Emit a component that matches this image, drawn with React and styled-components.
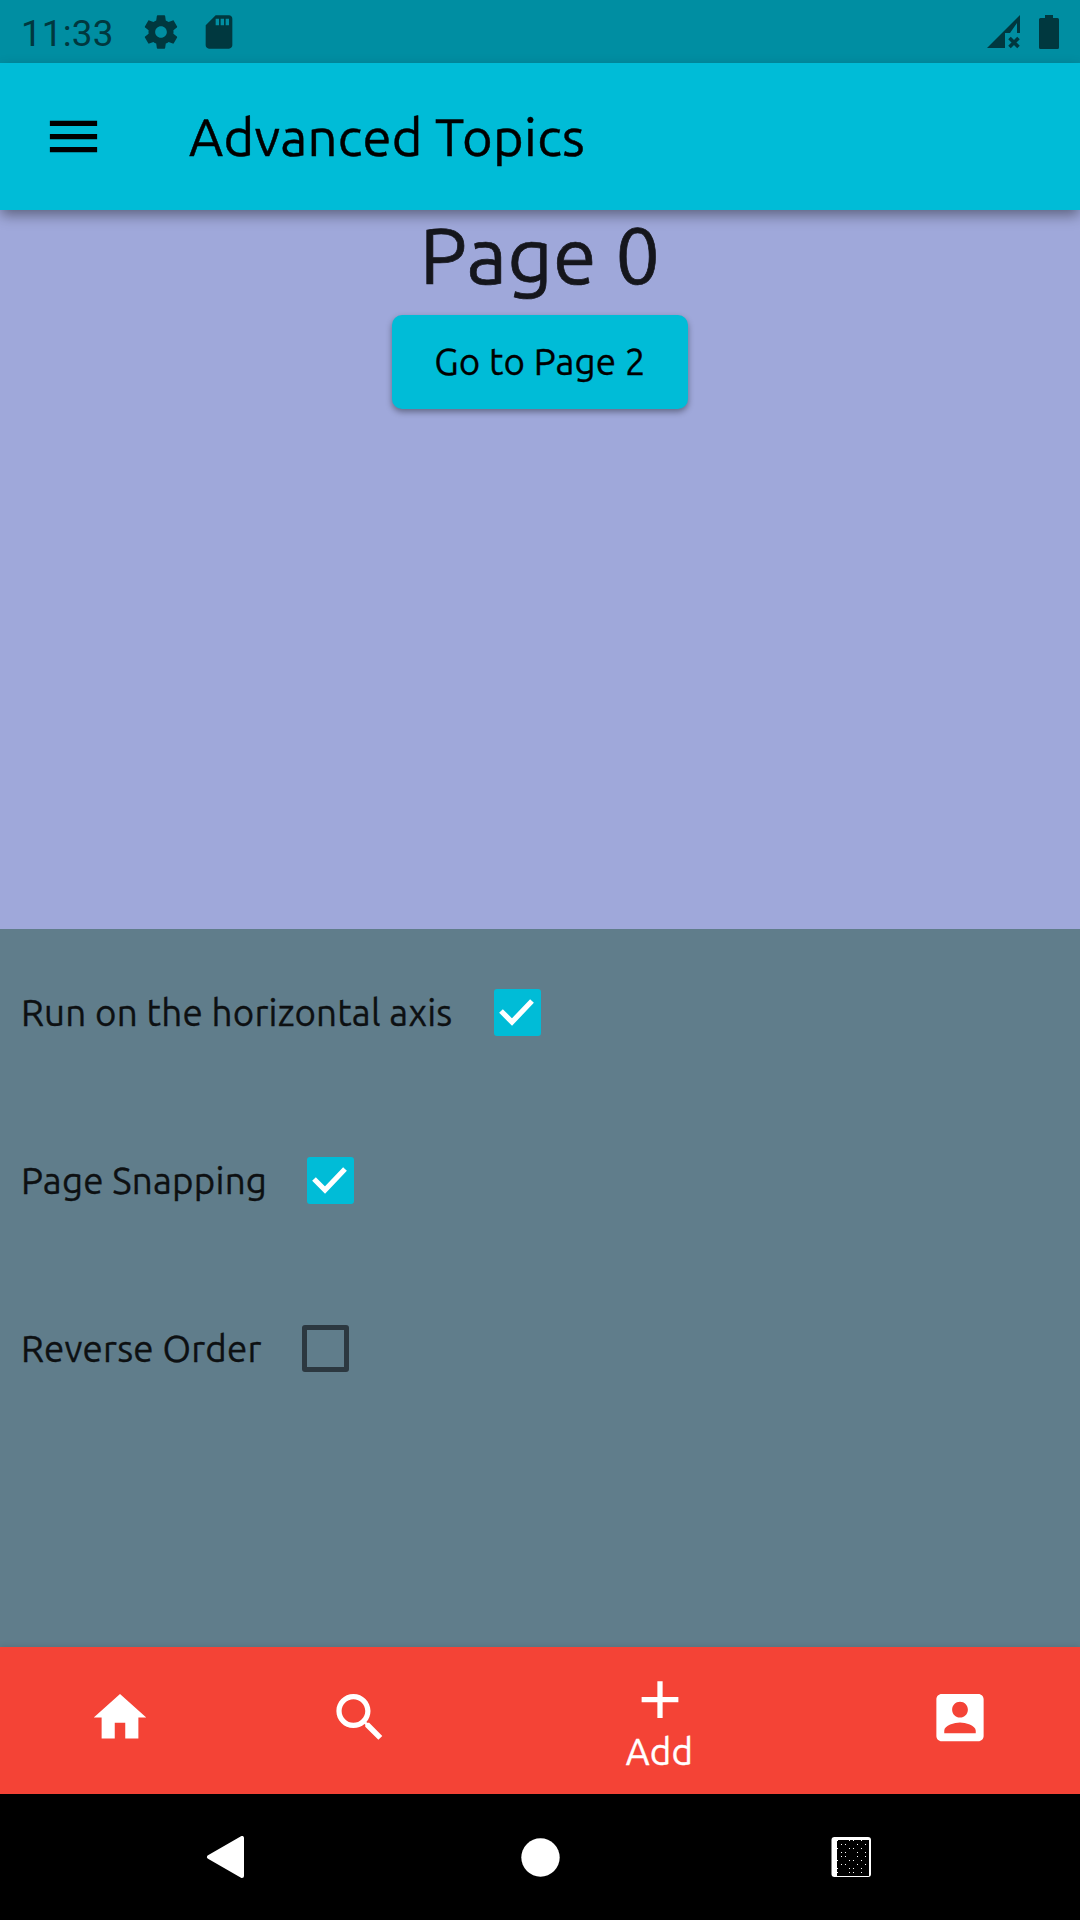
import React, { useState } from "react";
import styled, { createGlobalStyle } from "styled-components";

const Global = createGlobalStyle`
  * { box-sizing: border-box; }
  body { margin: 0; background: #000; }
`;

const cyan = "#00bcd7";
const uiFont = `Ubuntu, "Noto Sans", "Open Sans", sans-serif`;

const Screen = styled.div`
  width: 1080px;
  height: 1920px;
  display: flex;
  flex-direction: column;
  overflow: hidden;
  font-family: ${uiFont};
`;

const StatusBar = styled.header`
  height: 63px;
  flex: none;
  display: flex;
  align-items: center;
  padding: 0 21px 0 21px;
  background: #008ea2;
  color: #00383f;
`;
const Clock = styled.span`
  width: 120px;
  font: 400 36.75px/44px Roboto, sans-serif;
  letter-spacing: 0.2px;
  padding-top: 4px;
`;
const StatusIcon = styled.svg`
  display: block;
  width: 40px;
  height: 40px;
  margin-right: 18px;
  fill: currentColor;
`;
const StatusRight = styled.div`
  display: flex;
  gap: 18px;
  margin-left: auto;
  svg { display: block; fill: currentColor; }
`;

const AppBar = styled.nav`
  height: 147px;
  flex: none;
  display: flex;
  align-items: center;
  padding-left: 42px;
  background: ${cyan};
  box-shadow: 0 6px 13px -1px rgba(0, 0, 0, 0.42);
  z-index: 2;
  color: #000;
`;
const Label = styled.span`
  font-size: ${(p) => p.$size}px;
  font-weight: 400;
  line-height: 1.2;
  letter-spacing: ${(p) => p.$track || 0}px;
  -webkit-text-stroke: 0.009em currentColor;
  white-space: nowrap;
`;
const Title = styled(Label)`
  margin-left: 84px;
`;
const Glyph = styled.svg`
  display: block;
  width: ${(p) => p.$width || 63}px;
  height: 63px;
  fill: currentColor;
`;

const PageView = styled.main`
  height: 718.5px;
  flex: none;
  display: flex;
  flex-direction: column;
  align-items: center;
  background: #9fa8da;
`;
const Heading = styled(Label)`
  height: 105px;
  line-height: 90px;
  color: #15161c;
`;
const RaisedButton = styled.button`
  width: 296px;
  height: 94px;
  border: 0;
  border-radius: 10px;
  background: ${cyan};
  color: #000;
  font-family: inherit;
  padding: 0;
  box-shadow: 0 3px 6px rgba(0, 0, 0, 0.38);
`;

const Options = styled.section`
  flex: 1;
  background: #607d8b;
  color: #0d1012;
`;
const OptionRow = styled.label`
  height: 168px;
  display: flex;
  align-items: center;
  padding-left: 21px;
`;
const OptionText = styled(Label)`
  width: ${(p) => p.$width}px;
  padding-top: 2px;
`;
const CheckBox = styled.span`
  width: 47px;
  height: 47px;
  border-radius: 3px;
  border: 5px solid ${(p) => (p.$on ? cyan : "#2c3840")};
  background: ${(p) => (p.$on ? cyan : "transparent")};
  svg { display: block; width: 37px; height: 37px; overflow: visible; }
`;

const BottomNav = styled.nav`
  height: 147px;
  flex: none;
  display: flex;
  background: #f44336;
  color: #fff;
  box-shadow: 0 -1px 6px rgba(0, 0, 0, 0.1);
`;
const NavItem = styled.div`
  width: ${(p) => (p.$active ? 360 : 240)}px;
  padding-top: ${(p) => (p.$active ? 21 : 39)}px;
  display: flex;
  flex-direction: column;
  align-items: center;
`;
const NavLabel = styled(Label)`
  line-height: 44px;
  margin: -1px 1px 0 0;
`;

const SystemBar = styled.footer`
  height: 126px;
  flex: none;
  display: flex;
  align-items: center;
  justify-content: space-between;
  padding: 0 208px 0 206px;
  background: #000;
  svg { display: block; }
`;
const HomeDot = styled.svg`
  margin-left: 4px;
`;

const ICONS = {
  menu: "M3 18h18v-2H3v2zm0-5h18v-2H3v2zm0-7v2h18V6H3z",
  home: "M10 20v-6h4v6h5v-8h3L12 3 2 12h3v8z",
  search:
    "M15.5 14h-.79l-.28-.27C15.41 12.59 16 11.11 16 9.5 16 5.91 13.09 3 9.5 3S3 5.91 3 9.5 5.91 16 9.5 16c1.61 0 3.09-.59 4.23-1.57l.27.28v.79l5 4.99L20.49 19l-4.99-5zm-6 0C7.01 14 5 11.99 5 9.5S7.01 5 9.5 5 14 7.01 14 9.5 11.99 14 9.5 14z",
  add: "M19 13h-6v6h-2v-6H5v-2h6V5h2v6h6v2z",
  account:
    "M3 5v14c0 1.1.89 2 2 2h14c1.1 0 2-.9 2-2V5c0-1.1-.9-2-2-2H5c-1.11 0-2 .9-2 2zm12 4c0 1.66-1.34 3-3 3s-3-1.34-3-3 1.34-3 3-3 3 1.34 3 3zm-9 8c0-2 4-3.1 6-3.1s6 1.1 6 3.1v1H6v-1z",
  settings:
    "M19.43 12.98c.04-.32.07-.64.07-.98s-.03-.66-.07-.98l2.11-1.65c.19-.15.24-.42.12-.64l-2-3.46c-.12-.22-.39-.3-.61-.22l-2.49 1c-.52-.4-1.08-.73-1.69-.98l-.38-2.65C14.46 2.18 14.25 2 14 2h-4c-.25 0-.46.18-.49.42l-.38 2.65c-.61.25-1.17.59-1.69.98l-2.49-1c-.23-.09-.49 0-.61.22l-2 3.46c-.13.22-.07.49.12.64l2.11 1.65c-.04.32-.07.65-.07.98s.03.66.07.98l-2.11 1.65c-.19.15-.24.42-.12.64l2 3.46c.12.22.39.3.61.22l2.49-1c.52.4 1.08.73 1.69.98l.38 2.65c.03.24.24.42.49.42h4c.25 0 .46-.18.49-.42l.38-2.65c.61-.25 1.17-.59 1.69-.98l2.49 1c.23.09.49 0 .61-.22l2-3.46c.12-.22.07-.49-.12-.64l-2.11-1.65zM12 15.5c-1.93 0-3.5-1.57-3.5-3.5s1.57-3.5 3.5-3.5 3.5 1.57 3.5 3.5-1.57 3.5-3.5 3.5z",
  sd: "M18 2h-8L4.02 8 4 20c0 1.1.9 2 2 2h12c1.1 0 2-.9 2-2V4c0-1.1-.9-2-2-2zm-6 6h-2V4h2v4zm3 0h-2V4h2v4zm3 0h-2V4h2v4z",
};

const Icon = ({ name, width }) => (
  <Glyph viewBox="0 0 24 24" $width={width}><path d={ICONS[name]} /></Glyph>
);

const A = [0, 12, 16, 24];
const B = [4, 8, 20, 28];
const DOT_ROWS = [A, B, A, B, B, A, B, A, A];

const OPTIONS = [
  { text: "Run on the horizontal axis", width: 472.5, on: true },
  { text: "Page Snapping", width: 286, on: true },
  { text: "Reverse Order", width: 281, on: false },
];

export default function App() {
  const [options, setOptions] = useState(OPTIONS);
  const toggle = (i) =>
    setOptions(options.map((o, j) => (j === i ? { ...o, on: !o.on } : o)));
  return (
    <Screen>
      <Global />
      <StatusBar>
        <Clock>11:33</Clock>
        <StatusIcon viewBox="0 0 24 24"><path d={ICONS.settings} /></StatusIcon>
        <StatusIcon viewBox="0 0 24 24"><path d={ICONS.sd} /></StatusIcon>
        <StatusRight>
          <svg width="34" height="34" viewBox="0 0 34 34">
            <path d="M0 33 33 0V18H30V8L23 18H18V33Z" />
            <path d="M22.5 23 31.5 32M31.5 23 22.5 32" stroke="currentColor" strokeWidth="3.6" />
          </svg>
          <svg width="20" height="34" viewBox="0 0 20 34">
            <path d="M6 0h8v3h4.5q1.500 0 1.500 1.500v28q0 1.500-1.500 1.500h-17q-1.500 0-1.500-1.500v-28q0-1.500 1.500-1.500H6z" />
          </svg>
        </StatusRight>
      </StatusBar>

      <AppBar>
        <Icon name="menu" />
        <Title $size={52.5} $track={0.31}>Advanced Topics</Title>
      </AppBar>

      <PageView>
        <Heading $size={78.75} $track={0.4}>Page 0</Heading>
        <RaisedButton><Label $size={36.75} $track={0.15}>Go to Page 2</Label></RaisedButton>
      </PageView>

      <Options>
        {options.map((o, i) => (
          <OptionRow key={o.text} onClick={() => toggle(i)}>
            <OptionText $size={36.75} $width={o.width} $track={0.2}>{o.text}</OptionText>
            <CheckBox $on={o.on}>
              {o.on && (
                <svg viewBox="0 0 37 37">
                  <path d="M2 17 13 28 33 7" fill="none" stroke="#fff" strokeWidth="5.2" />
                </svg>
              )}
            </CheckBox>
          </OptionRow>
        ))}
      </Options>

      <BottomNav>
        <NavItem><Icon name="home" width={64} /></NavItem>
        <NavItem><Icon name="search" width={64} /></NavItem>
        <NavItem $active>
          <Icon name="add" width={64} />
          <NavLabel $size={36.75} $track={0.15}>Add</NavLabel>
        </NavItem>
        <NavItem><Icon name="account" width={64} /></NavItem>
      </BottomNav>

      <SystemBar>
        <svg width="39" height="42" viewBox="0 0 39 42">
          <path d="M3 21 36 2V40Z" fill="#fff" stroke="#fff" strokeWidth="4" strokeLinejoin="round" />
        </svg>
        <HomeDot width="39" height="39" viewBox="0 0 39 39">
          <circle cx="19.500" cy="19.500" r="19.200" fill="#fff" />
        </HomeDot>
        <svg width="41" height="40" viewBox="0 0 41 40">
          <rect x="0.500" width="39.500" height="40" rx="3" fill="#fff" />
          <g shapeRendering="crispEdges">
            <rect x="6" y="3" width="32" height="36" fill="#000" />
            {DOT_ROWS.map((row, r) =>
              row.map((x) => <rect key={r + "-" + x} x={6 + x} y={3 + r * 4} width="1" height="1" fill="#fff" />)
            )}
          </g>
        </svg>
      </SystemBar>
    </Screen>
  );
}
